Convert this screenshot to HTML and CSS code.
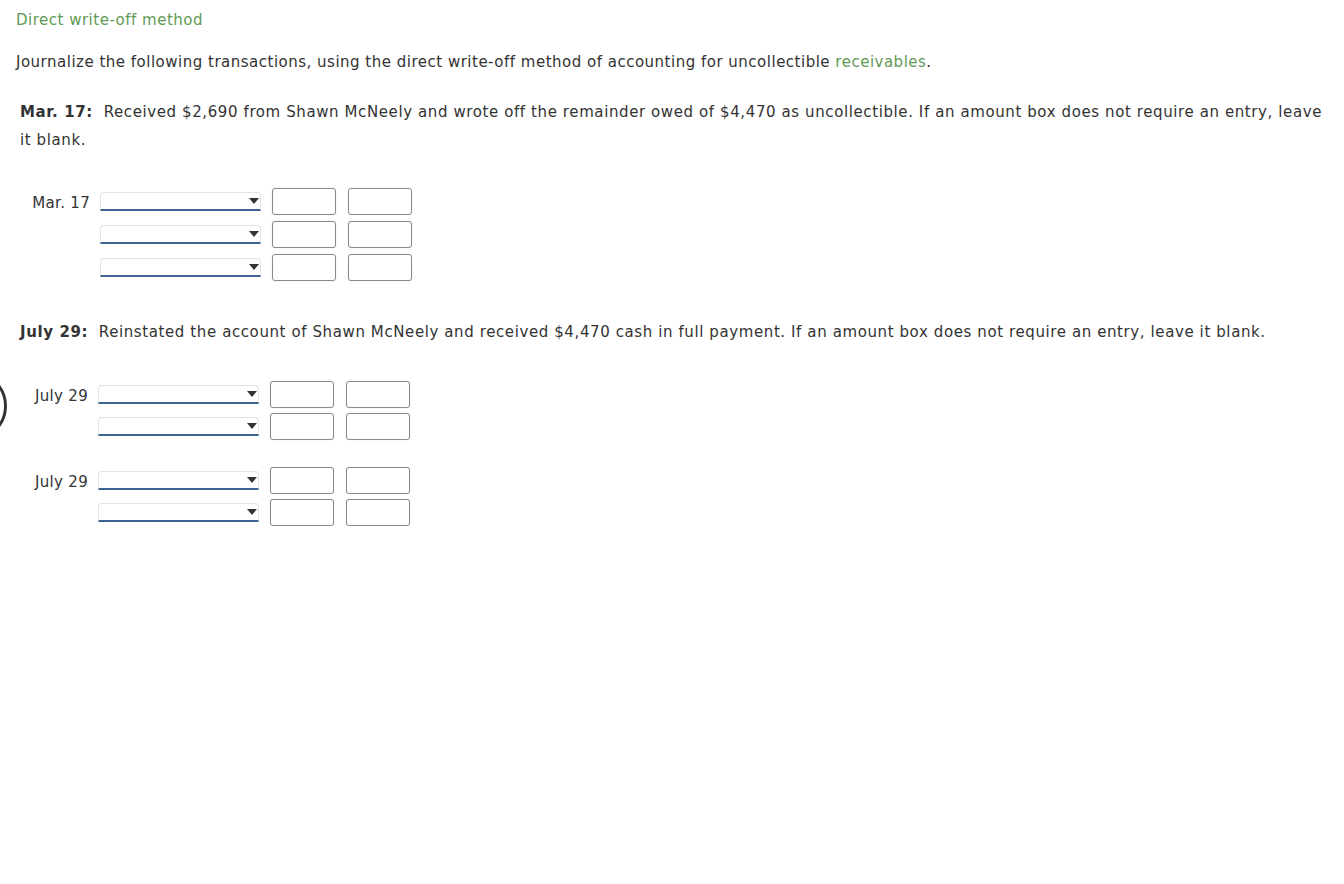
FILE: index.html
```html
<!DOCTYPE html>
<html>
<head>
<meta charset="utf-8">
<link rel="stylesheet" href="styles.css">
</head>
<body>
<div class="page">
  <div class="title">Direct write-off method</div>
  <p class="intro">Journalize the following transactions, using the direct write-off method of accounting for uncollectible <span class="green">receivables</span>.</p>

  <p class="task"><b>Mar. 17:</b>&nbsp; Received $2,690 from Shawn McNeely and wrote off the remainder owed of $4,470 as uncollectible. If an amount box does not require an entry, leave it blank.</p>

  <div class="journal j1">
    <div class="entry">
      <div class="row"><span class="date">Mar. 17</span><span class="sel"></span><span class="amt"></span><span class="amt"></span></div>
      <div class="row"><span class="date"></span><span class="sel"></span><span class="amt"></span><span class="amt"></span></div>
      <div class="row"><span class="date"></span><span class="sel"></span><span class="amt"></span><span class="amt"></span></div>
    </div>
  </div>

  <p class="task task2"><b>July 29:</b>&nbsp; Reinstated the account of Shawn McNeely and received $4,470 cash in full payment. If an amount box does not require an entry, leave it blank.</p>

  <div class="journal j2">
    <div class="ring"></div>
    <div class="entry">
      <div class="row"><span class="date">July 29</span><span class="sel"></span><span class="amt"></span><span class="amt"></span></div>
      <div class="row"><span class="date"></span><span class="sel"></span><span class="amt"></span><span class="amt"></span></div>
    </div>
    <div class="entry">
      <div class="row"><span class="date">July 29</span><span class="sel"></span><span class="amt"></span><span class="amt"></span></div>
      <div class="row"><span class="date"></span><span class="sel"></span><span class="amt"></span><span class="amt"></span></div>
    </div>
  </div>
</div>
</body>
</html>
```

FILE: styles.css
```css
html, body {
  margin: 0;
  padding: 0;
  background: #fff;
}
body {
  font-family: "DejaVu Sans", Verdana, sans-serif;
  font-size: 15px;
  letter-spacing: 0.5px;
  color: #333;
}
.page {
  padding: 11px 0 0 16px;
  position: relative;
}
.title {
  color: #5f9a55;
  line-height: 18px;
}
.green { color: #5f9a55; }
.intro {
  margin: 24px 0 0 0;
  line-height: 18px;
}
.task {
  margin: 27px 18px 0 4px;
  line-height: 28px;
  letter-spacing: 0.6px;
}
.task b { color: #333; }
.journal {
  position: relative;
  margin-top: 34px;
}
.entry {
  display: flex;
  flex-direction: column;
  gap: 6px;
}
.row {
  display: flex;
  align-items: center;
  height: 27px;
}
.date {
  width: 84px;
  text-align: right;
  padding-right: 10px;
  box-sizing: border-box;
  margin-top: 2px;
  letter-spacing: 0.3px;
}
.sel {
  width: 161px;
  height: 19px;
  box-sizing: border-box;
  border: 1px solid #e2e2e2;
  border-bottom: 2px solid #3d6490;
  border-radius: 4px 4px 0 0;
  margin-top: -1px;
  position: relative;
  background: #fff;
}
.sel::after {
  content: "";
  position: absolute;
  right: 1px;
  top: 5px;
  border-left: 5px solid transparent;
  border-right: 5px solid transparent;
  border-top: 6px solid #333;
}
.amt {
  width: 64px;
  height: 27px;
  box-sizing: border-box;
  border: 1px solid #8a8a8a;
  border-radius: 3px;
  margin-left: 11px;
  box-shadow: 0 0 1px rgba(0,0,0,0.25);
}
.amt + .amt { margin-left: 12px; }
.task2 { margin-top: 37px; }
.j2 {
  margin-top: 35px;
  margin-left: -2px;
  display: flex;
  flex-direction: column;
  gap: 27px;
}
.j2 .entry { gap: 5px; }
.ring {
  position: absolute;
  left: -77px;
  top: -10px;
  width: 64px;
  height: 64px;
  border: 3px solid #333;
  border-radius: 50%;
}
```
